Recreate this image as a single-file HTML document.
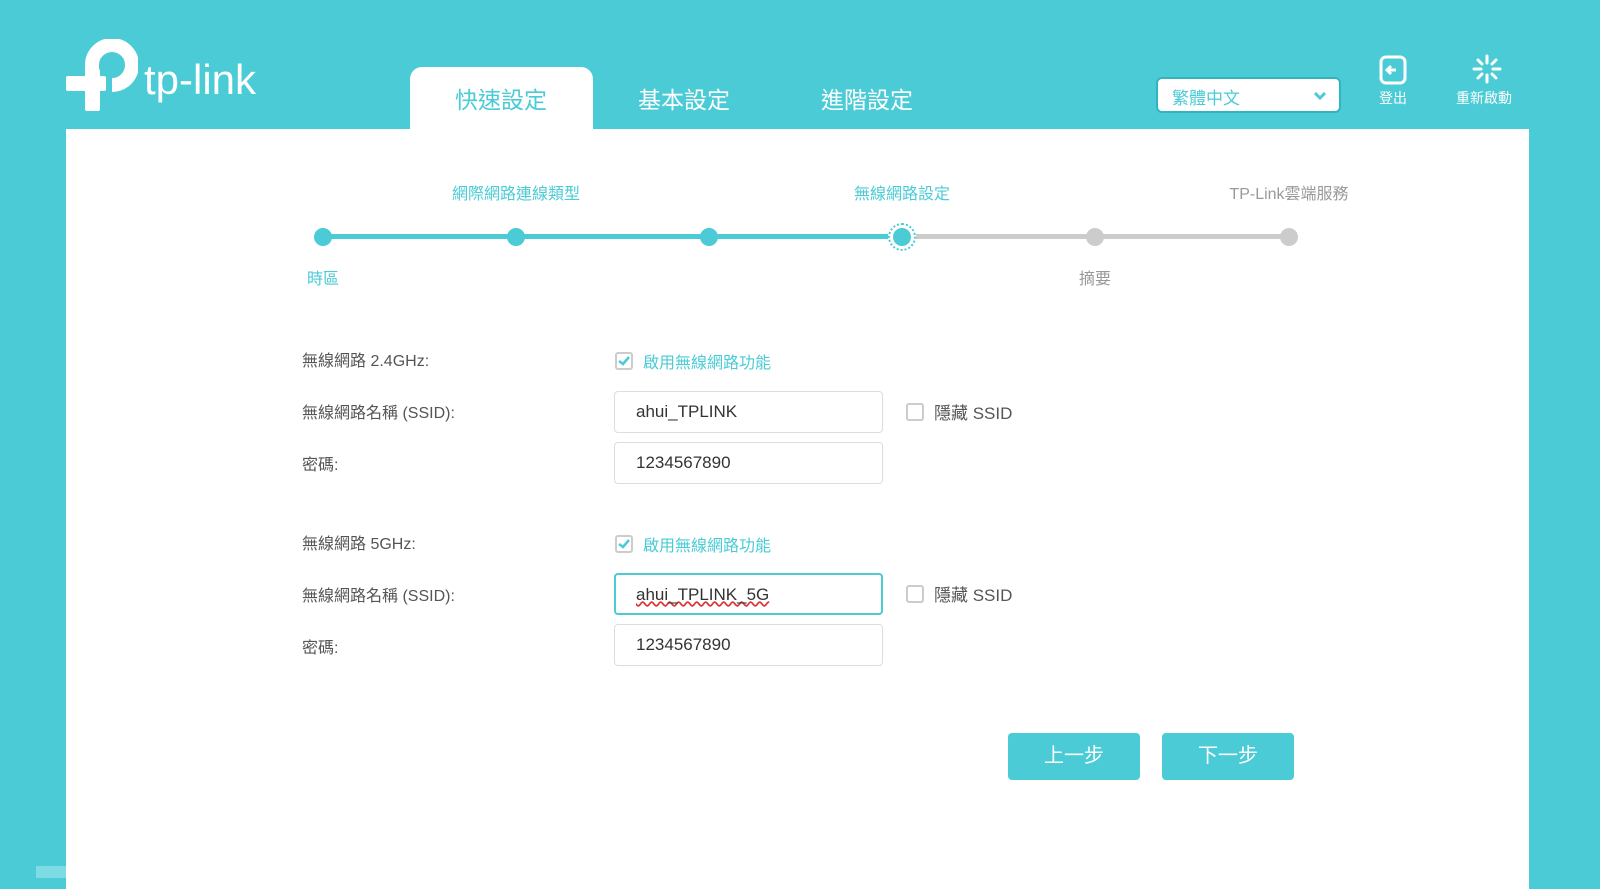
<!DOCTYPE html>
<html><head><meta charset="utf-8"><style>
*{margin:0;padding:0;box-sizing:border-box}
body{width:1600px;height:878px;background:#4acbd6;position:relative;overflow:hidden;font-family:"Liberation Sans","Noto Sans CJK TC",sans-serif;}
.abs{position:absolute}
.panel{left:66px;top:129px;width:1463px;height:760px;background:#fff}
.tab{top:67px;left:410px;width:183px;height:63px;background:#fff;border-radius:12px 12px 0 0;}
.tabt{font-size:23px;color:#fff;top:81px;transform:translateX(-50%);white-space:nowrap}
.lbl{font-size:16px;color:#555;left:302px;white-space:nowrap}
.inp{left:614px;width:269px;height:42px;border:1px solid #ddd;border-radius:4px;font-size:17px;color:#333;padding:10px 0 0 21px}
.cb{width:18px;height:18px;border:2px solid #ccc;border-radius:3px}
.step{font-size:16px;transform:translateX(-50%);white-space:nowrap}
.dot{width:18px;height:18px;border-radius:50%;transform:translate(-50%,-50%);top:237px}
.btn{top:733px;width:132px;height:47px;background:#4acbd6;border-radius:4px;color:#fff;font-size:20px;text-align:center;line-height:47px}
</style></head><body>
<div class="abs" style="left:36px;top:866px;width:30px;height:12px;background:#7fdbe3"></div>
<div class="abs panel"></div>
<svg class="abs" style="left:66px;top:39px" width="72" height="72" viewBox="0 0 72 72">
<path d="M26 44 V26 A20 20 0 1 1 46 46" fill="none" stroke="#fff" stroke-width="14"/>
<rect x="0" y="37" width="40" height="15" rx="2" fill="#fff"/>
<rect x="19" y="30" width="15" height="42" rx="2" fill="#fff"/>
</svg>
<div class="abs" style="left:144px;top:56px;font-size:42px;color:#fff;letter-spacing:0px">tp-link</div>
<div class="abs tab"></div>
<div class="abs tabt" style="left:501px;color:#4acbd6">快速設定</div>
<div class="abs tabt" style="left:684px">基本設定</div>
<div class="abs tabt" style="left:867px">進階設定</div>
<div class="abs" style="left:1156px;top:77px;width:185px;height:36px;background:#fff;border:2px solid #2fb4c0;border-radius:6px;color:#4acbd6;font-size:17px;padding:5px 0 0 14px">繁體中文
<svg class="abs" style="right:12px;top:12px" width="14" height="10" viewBox="0 0 14 10"><path d="M2 2 L7 7 L12 2" stroke="#4acbd6" stroke-width="3" fill="none"/></svg></div>
<svg class="abs" style="left:1379px;top:55px" width="28" height="30" viewBox="0 0 28 30"><rect x="2" y="2" width="24" height="26" rx="5" fill="none" stroke="#fff" stroke-width="3"/><path d="M17 15 H9 M12 11 L8 15 L12 19" stroke="#fff" stroke-width="3" fill="none"/></svg>
<div class="abs" style="left:1379px;top:88px;font-size:14px;color:#fff">登出</div>
<svg class="abs" style="left:1472px;top:54px" width="30" height="30" viewBox="0 0 30 30" stroke="#fff" stroke-width="3" stroke-linecap="round"><path d="M15 2V9M15 21V28M2 15H9M21 15H28M6 6L10 10M20 20L24 24M24 6L20 10M10 20L6 24"/></svg>
<div class="abs" style="left:1456px;top:88px;font-size:14px;color:#fff">重新啟動</div>

<div class="abs" style="left:323px;top:234px;width:579px;height:5px;background:#4acbd6"></div>
<div class="abs" style="left:902px;top:234px;width:387px;height:5px;background:#ccc"></div>
<div class="abs dot" style="left:323px;background:#4acbd6"></div>
<div class="abs dot" style="left:516px;background:#4acbd6"></div>
<div class="abs dot" style="left:709px;background:#4acbd6"></div>
<div class="abs dot" style="left:902px;width:28px;height:28px;border:2px dotted #4acbd6;background:#fff"></div>
<div class="abs dot" style="left:902px;background:#4acbd6"></div>
<div class="abs dot" style="left:1095px;background:#ccc"></div>
<div class="abs dot" style="left:1289px;background:#ccc"></div>
<div class="abs step" style="left:516px;top:180px;color:#4acbd6">網際網路連線類型</div>
<div class="abs step" style="left:902px;top:180px;color:#4acbd6">無線網路設定</div>
<div class="abs step" style="left:1289px;top:180px;color:#999">TP-Link雲端服務</div>
<div class="abs step" style="left:323px;top:265px;color:#4acbd6">時區</div>
<div class="abs step" style="left:1095px;top:265px;color:#999">摘要</div>

<div class="abs lbl" style="top:347px">無線網路 2.4GHz:</div>
<div class="abs cb" style="left:615px;top:352px;border-color:#ccc"><svg width="14" height="14" style="position:absolute;left:0;top:0"><path d="M2 7 L6 10 L12 3" stroke="#4acbd6" stroke-width="2.5" fill="none"/></svg></div>
<div class="abs" style="left:643px;top:349px;font-size:16px;color:#4acbd6">啟用無線網路功能</div>
<div class="abs lbl" style="top:399px">無線網路名稱 (SSID):</div>
<div class="abs inp" style="top:391px">ahui_TPLINK</div>
<div class="abs cb" style="left:906px;top:403px"></div>
<div class="abs" style="left:934px;top:399px;font-size:17px;color:#555">隱藏 SSID</div>
<div class="abs lbl" style="top:451px">密碼:</div>
<div class="abs inp" style="top:442px">1234567890</div>

<div class="abs lbl" style="top:530px">無線網路 5GHz:</div>
<div class="abs cb" style="left:615px;top:535px"><svg width="14" height="14" style="position:absolute;left:0;top:0"><path d="M2 7 L6 10 L12 3" stroke="#4acbd6" stroke-width="2.5" fill="none"/></svg></div>
<div class="abs" style="left:643px;top:532px;font-size:16px;color:#4acbd6">啟用無線網路功能</div>
<div class="abs lbl" style="top:582px">無線網路名稱 (SSID):</div>
<div class="abs inp" style="top:573px;border:2px solid #4acbd6;padding-left:20px"><span style="text-decoration:underline wavy #d33">ahui_TPLINK_5G</span></div>
<div class="abs cb" style="left:906px;top:585px"></div>
<div class="abs" style="left:934px;top:581px;font-size:17px;color:#555">隱藏 SSID</div>
<div class="abs lbl" style="top:634px">密碼:</div>
<div class="abs inp" style="top:624px">1234567890</div>

<div class="abs btn" style="left:1008px">上一步</div>
<div class="abs btn" style="left:1162px">下一步</div>
</body></html>
